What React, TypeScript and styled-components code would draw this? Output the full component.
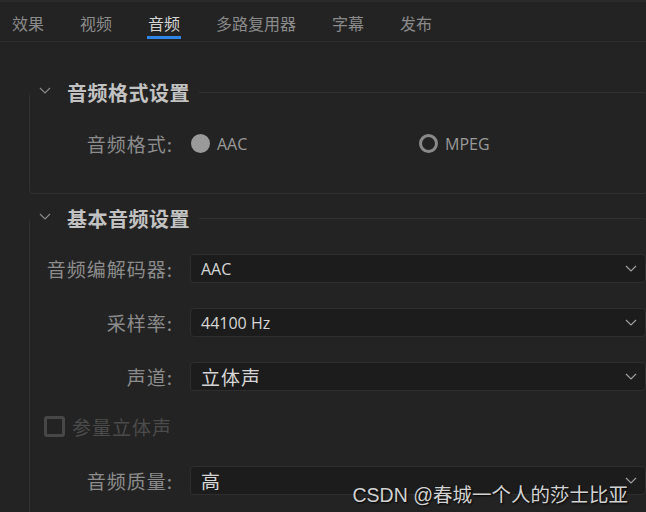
import { FC } from "react";
import styled, { createGlobalStyle } from "styled-components";

const GlobalStyle = createGlobalStyle`
	html, body {
		margin: 0;
		padding: 0;
		background: #232323;
	}
	body {
		font-family: "Noto Sans CJK SC", "Noto Sans", sans-serif;
		overflow: hidden;
	}
`;

const Page = styled.div`
	position: relative;
	width: 646px;
	height: 512px;
	box-sizing: border-box;
	overflow: hidden;
	background: #232323;
	border-top: 2px solid #2a2a2a;
`;

const TabBar = styled.nav`
	display: flex;
	align-items: flex-start;
	gap: 36px;
	height: 39px;
	padding-left: 12px;
	border-bottom: 1px solid #2d2d2d;
`;

const Tab = styled.div<{ $active?: boolean }>`
	margin: 0 -1px;
	padding: 10px 1px 2px;
	font-size: 16px;
	line-height: 22px;
	color: ${(p) => (p.$active ? "#d4d4d4" : "#8a8a8a")};
	border-bottom: 3px solid ${(p) => (p.$active ? "#2f86e6" : "transparent")};
	cursor: pointer;
`;

const Content = styled.div`
	padding: 38px 0 0 29px;
`;

const Section = styled.fieldset<{ $gap?: number }>`
	margin: ${(p) => p.$gap ?? 0}px -2px 0 0;
	padding: 0 1px 0 0;
	min-width: 0;
	border: 1px solid #313131;
	border-radius: 4px;
`;

const Legend = styled.legend`
	display: flex;
	align-items: center;
	height: 24px;
	padding: 0 9px;
`;

const Chevron = styled.svg`
	flex: none;
	width: 12px;
	height: 7px;
	margin-bottom: 4px;
`;

const Title = styled.span`
	margin-left: 16px;
	font-size: 20px;
	font-weight: 700;
	letter-spacing: 0.5px;
	color: #c2c2c2;
`;

const Body = styled.div<{ $top: number; $bottom: number }>`
	display: flex;
	flex-direction: column;
	gap: 25px;
	padding: ${(p) => p.$top}px 0 ${(p) => p.$bottom}px;
`;

const Row = styled.div`
	display: grid;
	grid-template-columns: 143px 1fr;
	column-gap: 17px;
	align-items: center;
	height: 29px;
`;

const Label = styled.label`
	text-align: right;
	font-size: 19px;
	letter-spacing: 1px;
	color: #8c8c8c;
	white-space: nowrap;
`;

const RadioGroup = styled.div`
	display: flex;
	align-items: center;
`;

const RadioOption = styled.div`
	display: flex;
	align-items: center;
	gap: 7px;
	width: 228px;
`;

const RadioDot = styled.span<{ $checked?: boolean }>`
	box-sizing: border-box;
	width: 19px;
	height: 19px;
	margin-left: 1px;
	border-radius: 50%;
	border: 3px solid;
	background: ${(p) => (p.$checked ? "#9a9a9a" : "transparent")};
	border-color: ${(p) => (p.$checked ? "#9a9a9a" : "#8a8a8a")};
`;

const OptionText = styled.span`
	font-family: "Open Sans", "Noto Sans", sans-serif;
	font-size: 16px;
	color: #9a9a9a;
`;

const Select = styled.div`
	display: flex;
	align-items: center;
	justify-content: space-between;
	box-sizing: border-box;
	height: 29px;
	padding: 0 8px 0 10px;
	background: #1c1c1c;
	border: 1px solid #2e2e2e;
	border-radius: 4px;
`;

const Value = styled.span<{ $cjk?: boolean }>`
	font-family: "Open Sans", "Noto Sans CJK SC", sans-serif;
	font-size: ${(p) => (p.$cjk ? 19 : 16)}px;
	letter-spacing: ${(p) => (p.$cjk ? 1 : 0)}px;
	color: #d6d6d6;
`;

const CheckRow = styled.div`
	display: flex;
	align-items: flex-start;
	gap: 7px;
	height: 25px;
	padding-left: 14px;
`;

const CheckBox = styled.span`
	box-sizing: border-box;
	width: 21px;
	height: 21px;
	border: 3px solid #474747;
	border-radius: 3px;
`;

const CheckText = styled.span`
	font-size: 19px;
	line-height: 21px;
	letter-spacing: 1px;
	color: #4b4b4b;
`;

const Watermark = styled.div`
	position: absolute;
	right: 18px;
	top: 477px;
	font-family: "Liberation Sans", "Noto Sans CJK SC", sans-serif;
	font-size: 19.5px;
	color: #d2d2d2;
	text-shadow: 1px 1px 2px #000;
	pointer-events: none;
	white-space: nowrap;
`;

const Caret: FC<{ color?: string }> = ({ color = "#8a8a8a" }) => (
	<Chevron viewBox="0 0 12 7">
		<polyline points="1,1 6,6 11,1" fill="none" stroke={color} strokeWidth="1.2" />
	</Chevron>
);

const Dropdown: FC<{ value: string; cjk?: boolean }> = ({ value, cjk }) => (
	<Select>
		<Value $cjk={cjk}>{value}</Value>
		<svg width="12" height="7" viewBox="0 0 12 7">
			<polyline points="1,1 6,6 11,1" fill="none" stroke="#a0a0a0" strokeWidth="1.2" />
		</svg>
	</Select>
);

const tabs = ["效果", "视频", "音频", "多路复用器", "字幕", "发布"];

const App: FC = () => {
	return (
		<>
			<GlobalStyle />
			<Page>
				<TabBar>
					{tabs.map((t) => (
						<Tab key={t} $active={t === "音频"}>
							{t}
						</Tab>
					))}
				</TabBar>
				<Content>
					<Section>
						<Legend>
							<Caret />
							<Title>音频格式设置</Title>
						</Legend>
						<Body $top={25} $bottom={35}>
							<Row>
								<Label>音频格式:</Label>
								<RadioGroup>
									<RadioOption>
										<RadioDot $checked />
										<OptionText>AAC</OptionText>
									</RadioOption>
									<RadioOption>
										<RadioDot />
										<OptionText>MPEG</OptionText>
									</RadioOption>
								</RadioGroup>
							</Row>
						</Body>
					</Section>
					<Section $gap={12}>
						<Legend>
							<Caret />
							<Title>基本音频设置</Title>
						</Legend>
						<Body $top={24} $bottom={20}>
							<Row>
								<Label>音频编解码器:</Label>
								<Dropdown value="AAC" />
							</Row>
							<Row>
								<Label>采样率:</Label>
								<Dropdown value="44100 Hz" />
							</Row>
							<Row>
								<Label>声道:</Label>
								<Dropdown value="立体声" cjk />
							</Row>
							<CheckRow>
								<CheckBox />
								<CheckText>参量立体声</CheckText>
							</CheckRow>
							<Row>
								<Label>音频质量:</Label>
								<Dropdown value="高" cjk />
							</Row>
						</Body>
					</Section>
				</Content>
				<Watermark>CSDN @春城一个人的莎士比亚</Watermark>
			</Page>
		</>
	);
};

export default App;
